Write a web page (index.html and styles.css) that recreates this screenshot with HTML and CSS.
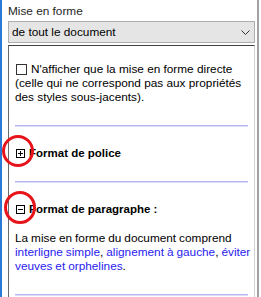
FILE: index.html
```html
<!DOCTYPE html>
<html lang="fr">
<head>
    <meta charset="UTF-8">
    <title>Mise en forme</title>
    <link rel="stylesheet" href="styles.css">
</head>
<body>
    <div class="pane">
        <div class="pane-title">Mise en forme</div>
        <div class="select">
            <span>de tout le document</span>
            <svg class="chevron" width="9" height="5" viewBox="0 0 9 5">
                <path d="M0.5 0.5 L4.5 4.5 L8.5 0.5" fill="none" stroke="#333" stroke-width="1"/>
            </svg>
        </div>
        <div class="details">
            <label class="check-row">
                <span class="checkbox"></span>N'afficher que la mise en forme directe
                (celle qui ne correspond pas aux propriétés des styles sous-jacents).
            </label>
            <div class="sep"></div>
            <div class="section-head">
                <span class="toggle">
                    <svg width="9" height="9" viewBox="0 0 9 9">
                        <rect x="0.5" y="0.5" width="8" height="8" fill="#fff" stroke="#000"/>
                        <path d="M2 4.5 H7 M4.5 2 V7" stroke="#000"/>
                    </svg>
                </span>
                Format de police
            </div>
            <div class="sep"></div>
            <div class="section-head">
                <span class="toggle">
                    <svg width="9" height="9" viewBox="0 0 9 9">
                        <rect x="0.5" y="0.5" width="8" height="8" fill="#fff" stroke="#000"/>
                        <path d="M2 4.5 H7" stroke="#000"/>
                    </svg>
                </span>
                Format de paragraphe :
            </div>
            <p class="summary">
                La mise en forme du document comprend
                <a href="#">interligne simple</a>, <a href="#">alignement à gauche</a>,
                <a href="#">éviter veuves et orphelines</a>.
            </p>
            <div class="sep"></div>
        </div>
    </div>
    <span class="mark mark-one"></span>
    <span class="mark mark-two"></span>
</body>
</html>
```

FILE: styles.css
```css
html, body {
    height: 297px;
    overflow: hidden;
}

body {
    margin: 0;
    background: #fff;
    font-family: "Liberation Sans", Arial, sans-serif;
    font-size: 11.8px;
    color: #000;
    position: relative;
}

.pane {
    width: 247px;
    height: 100%;
    padding: 0 2px 0 6px;
    border-left: 2px solid #2b7bd6;
    border-right: 2px solid #a3a3a3;
}

.pane-title {
    padding-top: 4px;
    line-height: 15px;
    color: #1e1e1e;
}

.select {
    margin-top: 2px;
    height: 20px;
    display: flex;
    align-items: center;
    justify-content: space-between;
    padding: 0 3px 0 3px;
    background: #e5e5e5;
    border: 1px solid #adadad;
}

.chevron {
    margin-right: 1px;
}

.details {
    margin-top: 2px;
    height: 300px;
    padding: 16px 6px 0 6px;
    border: 1px solid #d2d2d2;
    border-top-color: #3f3f3f;
    border-left-color: #6a6a6a;
}

.check-row {
    display: block;
    line-height: 14px;
}

.checkbox {
    display: inline-block;
    width: 11px;
    height: 11px;
    margin: 0 4px 0 1px;
    vertical-align: -2px;
    border: 1px solid #333;
    background: #fff;
    box-sizing: border-box;
}

.sep {
    margin: 21px 0 0 0;
    height: 0;
    border-top: 1px solid #b4b4ee;
    border-bottom: 1px solid #dedefa;
}

.section-head {
    margin-top: 19px;
    line-height: 14px;
    font-weight: bold;
    font-size: 11.5px;
    display: flex;
    align-items: center;
}

.toggle {
    display: flex;
    margin: 0 4px 0 1px;
}

.summary {
    margin: 15px -6px 0 0;
    line-height: 14px;
    word-spacing: -0.3px;
}

.summary + .sep {
    margin-top: 21px;
}

.summary a {
    color: #2a22f0;
    text-decoration: none;
}

.mark {
    position: absolute;
    border: 3px solid #e8141b;
    border-radius: 50%;
    box-sizing: border-box;
}

.mark-one {
    left: 2px;
    top: 135px;
    width: 32px;
    height: 32px;
}

.mark-two {
    left: 4px;
    top: 191px;
    width: 32px;
    height: 33px;
}
```
